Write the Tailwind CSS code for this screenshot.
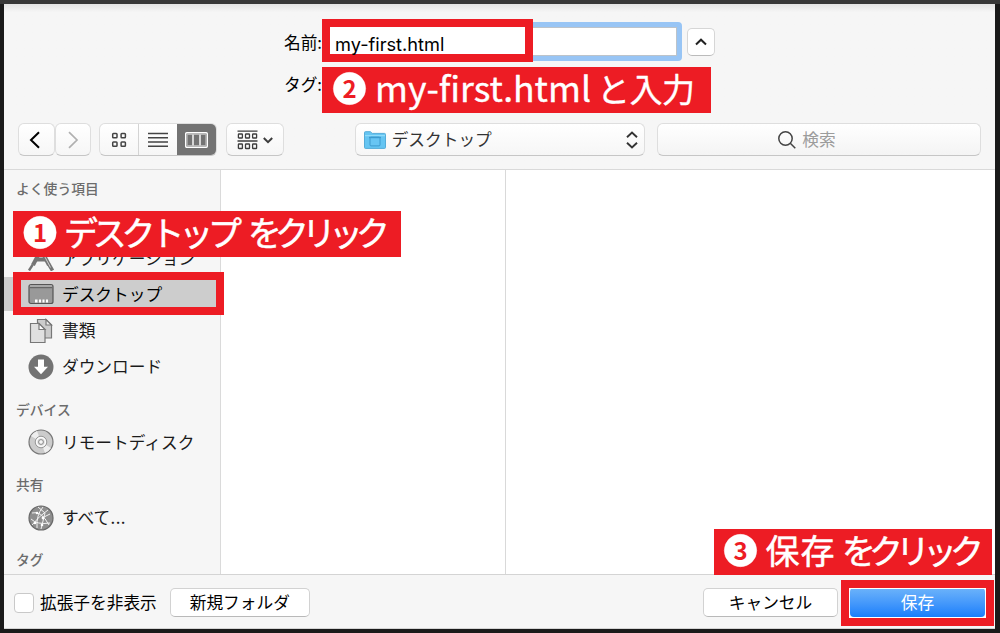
<!DOCTYPE html>
<html lang="ja">
<head>
<meta charset="utf-8">
<title>保存</title>
<script src="https://cdn.jsdelivr.net/npm/@tailwindcss/browser@4"></script>
</head>
<body class="relative w-[1000px] h-[633px] overflow-hidden bg-[#1a1a1a] border-t-4 border-[#383838] pl-1 pr-[5px] font-['Noto_Sans','Noto_Sans_CJK_JP',sans-serif] text-[#1b1b1b] whitespace-nowrap">
<main class="flex flex-col w-[991px] h-[625px] bg-[#f6f6f6] font-['Noto_Sans_CJK_JP',sans-serif] text-[16.7px] leading-none border-b border-[#d4d4d4]">
  <header class="h-[166px] shrink-0 border-b border-[#d9d9d9] bg-linear-to-b from-[#e4e4e4] via-[#f6f6f6] via-[5%] to-[#f6f6f6]">
    <div class="flex items-center pt-[18px] h-[57px] text-black">
      <div class="w-[318px] text-right pt-[2px]">名前:</div>
      <div class="flex w-[360px] h-[39px] rounded-[4px] bg-[#98c5f5] p-[5px]"><div class="flex-1 bg-white border border-[#bcc3ca]"></div></div>
      <button class="ml-[5px] w-7 h-7 bg-white rounded-[5px] border border-[#d6d6d6] border-b-[#bbb] flex items-center justify-center"><svg width="12" height="8" viewBox="0 0 12 8" fill="none" stroke="#222" stroke-width="2"><path d="M1 6.5 6 1.7 11 6.5"/></svg></button>
    </div>
    <div class="w-[318px] text-right h-[62px] pt-[15px] text-black">タグ:</div>
    <div class="flex h-8 pl-[14px] pr-[14px]">
      <button class="w-[37px] h-[33px] rounded-[6px] border border-[#dedede] border-b-[#c6c6c6] bg-linear-to-b from-white to-[#f6f6f6] flex items-center justify-center pr-[2px]"><svg width="12" height="18" viewBox="0 0 12 18" fill="none" stroke="#000" stroke-width="2"><path d="M10 1.2 2 9 10 16.8"/></svg></button>
      <button class="w-[36px] h-[33px] rounded-[6px] border border-[#dedede] border-b-[#c6c6c6] bg-linear-to-b from-white to-[#f6f6f6] flex items-center justify-center"><svg width="12" height="18" viewBox="0 0 12 18" fill="none" stroke="#b0b0b0" stroke-width="1.7"><path d="M2 1.2 10 9 2 16.8"/></svg></button>
      <div class="ml-2 flex w-[118px] h-[33px] rounded-[6px] border border-[#dedede] border-b-[#c6c6c6] bg-linear-to-b from-white to-[#f6f6f6] overflow-hidden">
        <div class="w-[39px] flex items-center justify-center border-r border-[#d4d4d4]"><svg width="16" height="16" viewBox="0 0 16 16" fill="none" stroke="#444" stroke-width="1.5"><rect x="1.7" y="1.4" width="4.3" height="4.3" rx=".8"/><rect x="10.1" y="1.4" width="4.3" height="4.3" rx=".8"/><rect x="1.7" y="10" width="4.3" height="4.3" rx=".8"/><rect x="10.1" y="10" width="4.3" height="4.3" rx=".8"/></svg></div>
        <div class="w-[38px] flex items-center justify-center"><svg width="20" height="16" viewBox="0 0 20 16" stroke="#444" stroke-width="1.4"><path d="M0 1.5H20M0 5.7H20M0 10H20M0 14.3H20"/></svg></div>
        <div class="flex-1 bg-[#737373] flex items-center justify-center pl-px"><svg width="23" height="16" viewBox="0 0 23 16" fill="none"><rect x=".7" y=".7" width="21.600" height="14.600" rx="1" stroke="#fff" stroke-width="1.4"/><path d="M8 2.500V13.500M15 2.500V13.500" stroke="#fff" stroke-width="1.4"/><path d="M2.200 2.500H20.800V13.500H2.200Z" stroke="#ddd" stroke-width=".6"/></svg></div>
      </div>
      <button class="ml-[9px] w-[58px] h-[33px] rounded-[6px] border border-[#dedede] border-b-[#c6c6c6] bg-linear-to-b from-white to-[#f6f6f6] flex items-center justify-center gap-[5px]"><svg width="21" height="20" viewBox="0 0 21 20" fill="none" stroke="#3d3d3d" stroke-width="1.3"><path d="M.5 1.2H20.5M.5 11H20.5"/><rect x="1.4" y="4" width="4" height="4" rx=".6"/><rect x="8.5" y="4" width="4" height="4" rx=".6"/><rect x="15.6" y="4" width="4" height="4" rx=".6"/><rect x="1.4" y="14" width="4" height="4.5" rx=".6"/><rect x="8.5" y="14" width="4" height="4.5" rx=".6"/><rect x="15.6" y="14" width="4" height="4.5" rx=".6"/></svg><svg class="mt-[2px]" width="10" height="7" viewBox="0 0 10 7" fill="none" stroke="#3d3d3d" stroke-width="2"><path d="M.8 1 5 5.2 9.2 1"/></svg></button>
      <button class="ml-[71px] w-[291px] h-[33px] rounded-[6px] border border-[#dedede] border-b-[#c6c6c6] bg-linear-to-b from-white to-[#f6f6f6] flex items-center pl-[8px] pr-[5px]">
        <svg width="22" height="18" viewBox="0 0 22 18"><path d="M.5 16.5V1.5Q.5.7 1.3.7H6.4L8.2 2.4H20.5Q21.5 2.4 21.5 3.4V16.5Q21.5 17.4 20.5 17.4H1.5Q.5 17.4.5 16.5Z" fill="#65c5f2" stroke="#55acd8"/><path d="M1 4.7H21" stroke="#9be0fb"/><rect x="6" y="6.2" width="10" height="8.7" rx="1" fill="#68c5f3" stroke="#3c9ace" stroke-width="1"/><path d="M5 6.500H17" stroke="#3c9ace" stroke-width="1.4"/></svg>
        <span class="ml-[6px] flex-1 text-left text-[#333]">デスクトップ</span>
        <svg width="14" height="18" viewBox="0 0 14 18" fill="none" stroke="#333" stroke-width="1.9"><path d="M2 6.3 7 1.5 12 6.3M2 11.7 7 16.5 12 11.7"/></svg>
      </button>
      <div class="ml-[12px] w-[324px] h-[33px] rounded-[6px] border border-[#dedede] border-b-[#c6c6c6] bg-linear-to-b from-white to-[#f4f4f4] flex items-center pl-[120px] text-[#9c9c9c]"><svg class="mr-[6px]" width="18" height="18" viewBox="0 0 18 18" fill="none" stroke="#444" stroke-width="1.5"><circle cx="7.5" cy="7.5" r="6.7"/><path d="M12.3 12.3 17.3 17.3"/></svg>検索</div>
    </div>
  </header>
  <div class="flex h-[405px] shrink-0 border-b border-[#d4d4d4] overflow-hidden">
    <aside class="w-[217px] shrink-0 border-r border-[#dadada]">
      <h2 class="h-[70px] pt-3 pl-3 text-[13.8px] font-medium text-[#6c6c6c]">よく使う項目</h2>
      <div class="h-9 flex items-center pl-6"><svg class="mr-2" width="26" height="26" viewBox="0 0 26 26" fill="none" stroke="#747474"><path d="M14 3 5 20" stroke-width="4"/><path d="M4.800 19.500 1 25.500" stroke-width="2.400"/><path d="M12 3 21 20" stroke-width="4"/><path d="M21 19.500 24.500 25.500" stroke-width="3.600"/><path d="M7 14.500H19" stroke-width="4"/><path d="M13.800 6 22.500 22.500" stroke="#f6f6f6" stroke-width=".7"/></svg>アプリケーション</div>
      <div class="h-9 flex items-center"><div class="h-[34px] w-full bg-[#cdcdcd] flex items-center pl-6 text-black"><svg class="mr-2" width="26" height="22" viewBox="0 0 26 22"><rect x="1" y="1.5" width="24" height="19" rx="2" fill="#999" stroke="#555" stroke-width="1.2"/><path d="M2 3H24" stroke="#b8b8b8"/><path d="M2 4.7H24" stroke="#595959"/><path d="M7 18h2.5M11 18h2M14.5 18h2M18 18h2" stroke="#fff" stroke-width="3"/></svg>デスクトップ</div></div>
      <div class="h-9 flex items-center pl-6 pt-px"><svg class="mr-2" width="26" height="26" viewBox="0 0 26 26" fill="#ccc" stroke="#777" stroke-width="1.2"><path d="M9.5 1.5H18L23.5 7V20H9.5Z"/><path d="M18 1.5V7H23.5Z" fill="#eee"/><path d="M2.5 5.5H11L17 11.5V24.5H2.5Z" fill="#e0e0e0"/><path d="M11 5.5V11.5H17Z" fill="#fff"/></svg>書類</div>
      <div class="h-9 flex items-center pl-6 pt-px"><svg class="mr-2" width="26" height="26" viewBox="0 0 26 26"><circle cx="13" cy="13" r="12.5" fill="#737373"/><path d="M10 5.5H16V12.7H20L13 20.3 6 12.7H10Z" fill="#fff"/></svg>ダウンロード</div>
      <h2 class="mt-[10px] h-[30px] flex items-center pt-px pl-3 text-[13.8px] font-medium text-[#6c6c6c]">デバイス</h2>
      <div class="h-9 flex items-center pl-6"><svg class="mr-2" width="26" height="26" viewBox="0 0 26 26" fill="none"><circle cx="13" cy="13" r="12" fill="#ccc" stroke="#777" stroke-width="1.2"/><path d="M13 13 3 7A12 12 0 0 1 9 2ZM13 13 23 19A12 12 0 0 1 17 24Z" fill="#eee"/><circle cx="13" cy="13" r="5.8" fill="#ddd" stroke="#999"/><circle cx="13" cy="13" r="4.4" stroke="#fff" stroke-width="1.2"/><circle cx="13" cy="13" r="2.4" fill="#f5f5f5" stroke="#888"/></svg>リモートディスク</div>
      <h2 class="mt-[10px] h-[30px] flex items-center pl-3 text-[13.8px] font-medium text-[#6c6c6c]">共有</h2>
      <div class="h-9 flex items-center pl-6"><svg class="mr-2" width="26" height="26" viewBox="0 0 26 26" fill="none"><circle cx="13" cy="13" r="12" fill="#8e8e8e" stroke="#686868" stroke-width="1.2"/><path d="M4 8Q13 5 21 20M15 2Q8 10 9 23M20 5Q11 11 4 20M3 14Q9 20 22 18M14 13 22 9M10 2 17 8 13 24" stroke="#f1f1f1" stroke-width="1"/><g fill="#fff"><circle cx="15" cy="13" r="1.4"/><circle cx="9" cy="8" r="1.3"/><circle cx="7" cy="18" r="1.3"/><circle cx="14" cy="20" r="1.3"/></g></svg><span>すべて<span class="font-['Inter','Noto_Sans_CJK_JP',sans-serif] text-[18px]">...</span></span></div>
      <h2 class="mt-[9px] h-[30px] flex items-center pl-3 text-[13.8px] font-medium text-[#6c6c6c]">タグ</h2>
    </aside>
    <section class="w-[285px] shrink-0 bg-white border-r border-[#d9d9d9]"></section>
    <section class="flex-1 bg-white"></section>
  </div>
  <footer class="flex-1 flex items-center pt-[2px] pl-[10px] pr-[10px] text-black">
    <span class="w-5 h-5 bg-white border border-[#c9c9c9] rounded-[4px]"></span>
    <span class="ml-[6px]">拡張子を非表示</span>
    <button class="ml-[13px] w-[140px] h-[29px] bg-white rounded-[5px] border border-[#d2d2d2] border-b-[#b9b9b9]">新規フォルダ</button>
    <button class="ml-auto w-[135px] h-[29px] bg-white rounded-[5px] border border-[#d2d2d2] border-b-[#b9b9b9]">キャンセル</button>
    <button class="ml-[12px] w-[135px] h-[29px] rounded-[4px] bg-linear-to-b from-[#6cb3fa] to-[#157efb] text-white">保存</button>
  </footer>
</main>

<!-- Step annotations laid over the dialog -->
<div class="absolute left-[322px] top-[15px] w-[211px] h-[43px] border-8 border-[#ed1c24] bg-white"><span class="block pl-[5px] pt-[6px] font-['Inter',sans-serif] text-[18.200px] leading-[22px] text-black">my-first.html</span></div>
<div class="absolute left-[13px] top-[268px] w-[211px] h-[43px] border-8 border-[#ed1c24]"></div>
<div class="absolute left-[841px] top-[576px] w-[153px] h-[46px] border-8 border-[#ed1c24] shadow-[inset_0_0_0_1px_#fff]"></div>

<svg class="absolute left-[322px] top-[63px] bg-[#ed1c24] font-['Noto_Sans_CJK_JP',sans-serif]" width="389" height="46" fill="#fff" stroke="#fff" stroke-width=".35" stroke-linejoin="round"><circle cx="27.500" cy="21.5" r="16.200"/><text x="27.500" y="30.500" text-anchor="middle" font-size="24" fill="#ed1c24" stroke="none" class="font-bold">2</text><text x="53" y="35" font-size="34" textLength="216" lengthAdjust="spacingAndGlyphs">my-first.html</text><text x="275" y="35" font-size="33" textLength="98" lengthAdjust="spacing">と入力</text></svg>
<svg class="absolute left-[13px] top-[207px] bg-[#ed1c24] font-['Noto_Sans_CJK_JP',sans-serif]" width="388" height="46" fill="#fff" stroke="#fff" stroke-width=".5" stroke-linejoin="round"><circle cx="27" cy="21.5" r="16.200"/><text x="27" y="30.500" text-anchor="middle" font-size="24" fill="#ed1c24" stroke="none" class="font-bold">1</text><text x="51" y="35" font-size="34" textLength="178" lengthAdjust="spacing">デスクトップ</text><text x="235" y="35" font-size="34" textLength="142" lengthAdjust="spacing">をクリック</text></svg>
<svg class="absolute left-[714px] top-[525px] bg-[#ed1c24] font-['Noto_Sans_CJK_JP',sans-serif]" width="278" height="46" fill="#fff" stroke="#fff" stroke-width=".5" stroke-linejoin="round"><circle cx="26.500" cy="21.5" r="16.200"/><text x="26.500" y="30.500" text-anchor="middle" font-size="24" fill="#ed1c24" stroke="none" class="font-bold">3</text><text x="51.500" y="35" font-size="34" textLength="69" lengthAdjust="spacing">保存</text><text x="128" y="35" font-size="34" textLength="142" lengthAdjust="spacing">をクリック</text></svg>
</body>
</html>
